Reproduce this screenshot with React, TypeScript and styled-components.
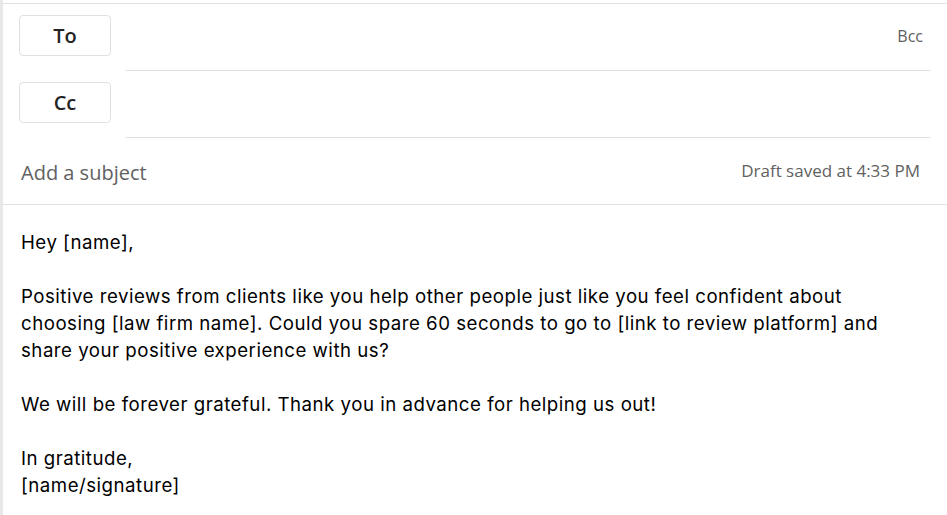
import React from 'react';
import styled, { createGlobalStyle } from 'styled-components';

const GlobalStyle = createGlobalStyle`
  html, body {
    margin: 0;
    padding: 0;
    background: #ffffff;
  }
`;

const headerFont = `'Segoe UI', 'Open Sans', 'Noto Sans', sans-serif`;
const bodyFont = `Aptos, 'Inter', 'Lato', sans-serif`;

const Compose = styled.div`
  min-height: 515px;
  box-sizing: border-box;
  border-left: 3px solid #e8e8e8;
  padding-top: 3px;
  font-family: ${headerFont};
`;

const Header = styled.div`
  border-top: 1px solid #e0e0e0;
  border-bottom: 1px solid #e0e0e0;
`;

const RecipientRow = styled.div`
  display: flex;
  height: 67px;
  padding: 0 17px 0 16px;
`;

const FieldButton = styled.button`
  flex: none;
  align-self: flex-start;
  margin-top: 11px;
  width: 92px;
  height: 41px;
  box-sizing: border-box;
  border: 1px solid #e0e0e0;
  border-radius: 4px;
  background: #ffffff;
  font-family: ${headerFont};
  font-size: 20px;
  font-weight: 600;
  color: #242424;
  padding: 0;
`;

const Field = styled.div`
  flex: 1;
  margin-left: 15px;
  border-bottom: 1px solid #e0e0e0;
  display: flex;
  align-items: center;
  justify-content: flex-end;
`;

const SideLink = styled.span`
  font-size: 16px;
  color: #616161;
  margin-right: 7px;
  padding-bottom: 2px;
`;

const SubjectRow = styled.div`
  display: flex;
  align-items: center;
  justify-content: space-between;
  height: 66px;
  padding: 0 27px 0 18px;
`;

const SubjectPlaceholder = styled.span`
  font-size: 20px;
  color: #616161;
  padding-top: 3px;
`;

const DraftStatus = styled.span`
  font-size: 17px;
  color: #616161;
  padding-bottom: 2px;
`;

const Body = styled.div`
  padding: 24px 18px 0 18px;
  font-family: ${bodyFont};
  font-size: 18.67px;
  letter-spacing: 0.5px;
  line-height: 27px;
  color: #000000;
`;

const Paragraph = styled.p`
  margin: 0 0 27px 0;
  white-space: nowrap;
`;

export default function App(): React.ReactElement {
  return (
    <>
      <GlobalStyle />
      <Compose>
        <Header>
          <RecipientRow>
            <FieldButton>To</FieldButton>
            <Field>
              <SideLink>Bcc</SideLink>
            </Field>
          </RecipientRow>
          <RecipientRow>
            <FieldButton>Cc</FieldButton>
            <Field />
          </RecipientRow>
          <SubjectRow>
            <SubjectPlaceholder>Add a subject</SubjectPlaceholder>
            <DraftStatus>Draft saved at 4:33 PM</DraftStatus>
          </SubjectRow>
        </Header>
        <Body>
          <Paragraph>Hey [name],</Paragraph>
          <Paragraph>
            Positive reviews from clients like you help other people just like you feel confident about
            <br />
            choosing [law firm name]. Could you spare 60 seconds to go to [link to review platform] and
            <br />
            share your positive experience with us?
          </Paragraph>
          <Paragraph>We will be forever grateful. Thank you in advance for helping us out!</Paragraph>
          <Paragraph>
            In gratitude,
            <br />
            [name/signature]
          </Paragraph>
        </Body>
      </Compose>
    </>
  );
}
